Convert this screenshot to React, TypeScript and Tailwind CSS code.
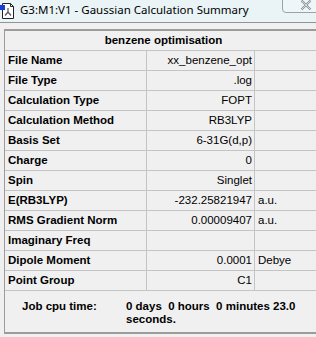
import React from "react";

type Row = { label: string; value: string; unit?: string };

const ROWS: Row[] = [
  { label: "File Name", value: "xx_benzene_opt" },
  { label: "File Type", value: ".log" },
  { label: "Calculation Type", value: "FOPT" },
  { label: "Calculation Method", value: "RB3LYP" },
  { label: "Basis Set", value: "6-31G(d,p)" },
  { label: "Charge", value: "0" },
  { label: "Spin", value: "Singlet" },
  { label: "E(RB3LYP)", value: "-232.25821947", unit: "a.u." },
  { label: "RMS Gradient Norm", value: "0.00009407", unit: "a.u." },
  { label: "Imaginary Freq", value: "" },
  { label: "Dipole Moment", value: "0.0001", unit: "Debye" },
  { label: "Point Group", value: "C1" },
];

function DocIcon() {
  return (
    <svg width="16" height="18" viewBox="0 0 16 18" className="shrink-0">
      <path d="M2.5 1.5h8l3 3v12h-11z" fill="#fff" stroke="#222" />
      <path d="M10.5 1.5v3h3" fill="none" stroke="#222" />
      <path d="M8 6v4M8 10l-3 3.5M8 10l3 3.5" stroke="#555" strokeWidth="1.2" fill="none" />
      <rect x="0" y="3" width="5" height="5" fill="#1a3fd6" />
    </svg>
  );
}

export default function App() {
  return (
    <div
      className="w-[316px] h-[337px] overflow-hidden bg-[#f0f0f0] text-black"
      style={{ fontFamily: '"Liberation Sans", Arial, sans-serif' }}
    >
      {/* title bar */}
      <div className="h-[23px] bg-[#eaf4f6] border-b border-[#8e9496] flex items-start">
        <div className="pt-[2px]">
          <DocIcon />
        </div>
        <span
          className="ml-[4px] mt-[1px] text-[11.5px] leading-[18px] text-black"
          style={{ fontFamily: '"Noto Sans", "Open Sans", sans-serif' }}
        >
          G3:M1:V1 - Gaussian Calculation Summary
        </span>
        <div className="ml-auto -mt-[6px] mr-[-12px] w-[46px] h-[19px] rounded-[4px] border border-[#9aa3a6] bg-[#eef6f8] flex items-start">
          <svg width="12" height="10" viewBox="0 0 12 10" className="ml-[17px] mt-[5px]">
            <path d="M1.5 0.5l9 9M10.5 0.5l-9 9" stroke="#8a969c" strokeWidth="2.2" />
            <path d="M1.5 0.5l9 9M10.5 0.5l-9 9" stroke="#dfe6e8" strokeWidth="0.8" />
          </svg>
        </div>
      </div>

      {/* summary table */}
      <div className="ml-[4px] mt-[6px] w-[318px] border-t-2 border-l border-b-2 border-[#9c9c9c]">
        <div className="h-[20px] border-b border-[#c4c4c4] flex items-center justify-center text-[11.5px] font-bold">
          benzene optimisation
        </div>
        {ROWS.map((r) => (
          <div key={r.label} className="h-[20px] border-b border-[#c4c4c4] flex text-[11.5px]">
            <div className="w-[142px] border-r border-[#c4c4c4] pl-[3px] font-bold flex items-center">
              {r.label}
            </div>
            <div className="w-[108px] border-r border-[#c4c4c4] pr-[2px] flex items-center justify-end">
              {r.value}
            </div>
            <div className="flex-1 pl-[3px] flex items-center">{r.unit}</div>
          </div>
        ))}
        <div className="h-[41px] flex text-[11.5px] font-bold leading-[13px] pt-[9px]">
          <div className="pl-[17px] w-[121px]">Job cpu time:</div>
          <div>
            0 days&nbsp;&nbsp;0 hours&nbsp;&nbsp;0 minutes 23.0
            <br />
            seconds.
          </div>
        </div>
      </div>
    </div>
  );
}
